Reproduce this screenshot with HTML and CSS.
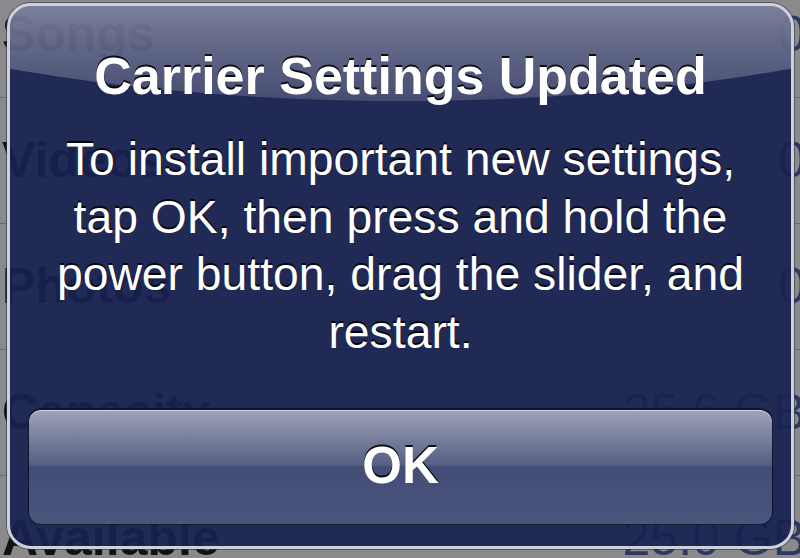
FILE: index.html
```html
<!DOCTYPE html>
<html lang="en">
<head>
    <meta charset="UTF-8">
    <meta name="viewport" content="width=device-width, initial-scale=1.0">
    <title>Carrier Settings Updated</title>
    <link rel="stylesheet" href="styles.css">
</head>
<body>
    <div class="screen">
        <ul class="usage-list">
            <li class="row"><span class="label">Songs</span><span class="value">0</span></li>
            <li class="row"><span class="label">Videos</span><span class="value">0</span></li>
            <li class="row"><span class="label">Photos</span><span class="value">0</span></li>
            <li class="row"><span class="label">Capacity</span><span class="value">25.6 GB</span></li>
            <li class="row"><span class="label">Available</span><span class="value">25.0 GB</span></li>
        </ul>

        <div class="alert" role="alertdialog" aria-labelledby="alertTitle">
            <div class="alertGloss"></div>
            <h1 class="alertTitle" id="alertTitle">Carrier Settings Updated</h1>
            <p class="alertMessage">
                To install important new settings,<br>
                tap OK, then press and hold the<br>
                power button, drag the slider, and<br>
                restart.
            </p>
            <button class="alertBtn" type="button">OK</button>
        </div>
    </div>
</body>
</html>
```

FILE: styles.css
```css
body {
    margin: 0;
    padding: 0;
    background-color: #8a8a8c;
    font-family: "Liberation Sans", Arial, sans-serif;
}

.screen {
    position: relative;
    width: 800px;
    height: 558px;
    overflow: hidden;
}

/* the settings list dimmed behind the alert */
.usage-list {
    list-style: none;
    margin: -28px 0 0 0;
    padding: 0;
}

.row {
    display: flex;
    justify-content: space-between;
    height: 125px;
    line-height: 125px;
    font-size: 50px;
    border-bottom: 1px solid #6c6c70;
    padding: 0 0 0 2px;
    margin-right: -6px;
}

.label {
    font-weight: 700;
    color: #111214;
}

.value {
    color: #2c3a60;
}

/* alert */
.alert {
    position: absolute;
    top: 3px;
    left: 7px;
    width: 781px;
    height: 540px;
    border: 3px solid #cdd1dc;
    border-radius: 24px;
    background: rgba(24, 33, 80, 0.92);
    box-shadow: 0 0 0 1px rgba(50, 52, 62, 0.6);
    overflow: hidden;
    display: flex;
    flex-direction: column;
    align-items: center;
    color: #fff;
}

.alertGloss {
    position: absolute;
    top: -400px;
    left: -400px;
    width: 1581px;
    height: 495px;
    border-radius: 50%;
    background: linear-gradient(to bottom, rgba(255, 255, 255, 0.42) 80%, rgba(255, 255, 255, 0.3) 88%, rgba(255, 255, 255, 0.17) 100%);
    pointer-events: none;
}

.alertTitle {
    position: relative;
    margin: 40px 0 0 0;
    font-size: 52px;
    line-height: 60px;
    font-weight: 700;
    text-shadow: 0 -2px 0 rgba(0, 0, 0, 0.85);
}

.alertMessage {
    position: relative;
    margin: 25px 0 0 0;
    font-size: 46.3px;
    line-height: 57.5px;
    text-align: center;
    text-shadow: 0 -2px 0 rgba(0, 0, 0, 0.85);
}

.alertBtn {
    position: relative;
    margin: 48px 0 0 0;
    width: 745px;
    height: 116px;
    border: 1px solid rgba(8, 12, 36, 0.9);
    border-radius: 13px;
    background: linear-gradient(to bottom,
        rgba(170, 175, 196, 0.92) 0%,
        rgba(128, 135, 163, 0.9) 26%,
        rgba(96, 104, 138, 0.88) 48%,
        rgba(72, 82, 122, 0.88) 50%,
        rgba(80, 91, 132, 0.88) 100%);
    box-shadow: inset 0 1px 0 rgba(225, 228, 238, 0.8), 0 -1px 0 rgba(10, 14, 38, 0.7);
    font-family: "Liberation Sans", Arial, sans-serif;
    font-size: 51px;
    font-weight: 700;
    color: #fff;
    text-shadow: 0 -2px 0 rgba(0, 0, 0, 0.9);
    padding: 0 0 4px 0;
}
```
